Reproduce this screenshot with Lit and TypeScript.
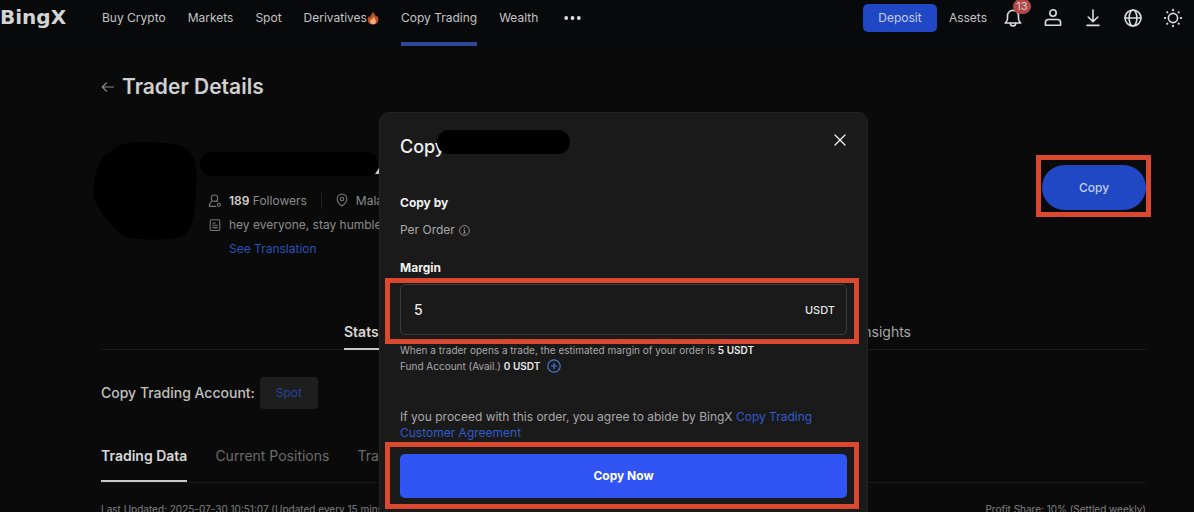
import { LitElement, html, css, svg } from "lit";
import { customElement, state } from "lit/decorators.js";

const closeIcon = html`<svg width="12" height="12" viewBox="0 0 12 12" fill="none" stroke="#f2f2f2" stroke-width="1.3" stroke-linecap="round" aria-hidden="true"><path d="M1 1l10 10M11 1L1 11" /></svg>`;

const backIcon = html`<svg width="14" height="12" viewBox="0 0 14 12" fill="none" stroke="#8a8a8a" stroke-width="1.2" stroke-linecap="round" stroke-linejoin="round" aria-hidden="true"><path d="M12.500 6H1.200M5.500 2L1.200 6l4.300 4" /></svg>`;

const flameIcon = html`<svg width="12" height="14" viewBox="0 0 12 14" aria-hidden="true">
  <path d="M5.600 0.500C6.300 2.500 8.300 3.600 9.300 5.600 9.700 5.200 9.800 4.700 9.800 4.300 11 5.800 11.500 7.400 11.300 9.200 11 11.900 8.800 13.500 6.100 13.500 3.200 13.500 0.900 11.800 0.800 8.900 0.700 7.200 1.500 5.900 2.400 4.700 2.500 5.400 2.700 5.900 3.200 6.300 3.300 4.100 5.600 3.200 5.600 0.500z" fill="#b8501f" />
  <path d="M6.200 5.200C6.600 7 8.900 7.900 8.900 10.400 8.900 12.200 7.700 13.200 6.100 13.200 4.400 13.200 3.200 12.200 3.200 10.500 3.200 9.400 3.700 8.600 4.300 8 4.500 8.700 4.800 9 5.200 9.100 5.100 7.600 6.200 6.900 6.200 5.200z" fill="#efb27c" />
</svg>`;

const stroke = (body: unknown) => html`<svg width="20" height="20" viewBox="0 0 20 20" fill="none" stroke="#dcdcdc" stroke-width="1.600" stroke-linecap="round" stroke-linejoin="round" aria-hidden="true">${body}</svg>`;

const bellIcon = stroke(svg`<path d="M2.200 15h15.600c-1.500-1.200-2.300-2.500-2.300-4.300V8c0-3.200-2.200-5.600-5.500-5.600S4.500 4.800 4.500 8v2.700c0 1.800-.8 3.100-2.300 4.300z"/><path d="M7.300 15.200a2.700 2.700 0 0 0 5.400 0"/>`);
const userIcon = stroke(svg`<circle cx="10" cy="5" r="3.200"/><path d="M2.400 17.300v-2.600c0-2 1.200-3.200 3.200-3.200h8.800c2 0 3.200 1.200 3.200 3.200v2.600z"/>`);
const downloadIcon = stroke(svg`<path d="M10 2v11.500M5.200 9l4.800 4.600L14.800 9M4 17.400h12"/>`);
const globeIcon = stroke(svg`<circle cx="10" cy="10" r="8"/><path d="M2 10h16"/><ellipse cx="10" cy="10" rx="3.900" ry="8"/>`);
const sunIcon = stroke(svg`<circle cx="10" cy="10" r="4.600"/><path stroke-width="2" d="M10 1.800v.4M10 17.800v.4M1.800 10h.4M17.800 10h.4M4.200 4.200l.2.2M15.600 15.600l.2.2M4.200 15.800l.2-.2M15.600 4.400l.2-.2"/>`);

const small = (body: unknown) => html`<svg width="14" height="14" viewBox="0 0 14 14" fill="none" stroke="#777" stroke-width="1.100" stroke-linecap="round" stroke-linejoin="round" aria-hidden="true">${body}</svg>`;

const followersIcon = small(svg`<circle cx="6.500" cy="4.200" r="3.200"/><path d="M4.600 7C2.500 7.800 1.300 9.800 1.300 12.400h6.500M8.600 7l.8.500"/><circle cx="10.900" cy="10.800" r="1.500"/>`);
const pinIcon = small(svg`<path d="M7 13C4 10.800 2.200 8.600 2.200 5.900 2.200 3.100 4.300 1.200 7 1.200s4.800 1.900 4.800 4.700C11.800 8.600 10 10.800 7 13z"/><circle cx="7" cy="5.900" r="1.700"/>`);
const noteIcon = small(svg`<rect x="2.200" y="1.700" width="9.600" height="10.800" rx="1.600"/><path d="M4.700 5h2.600M4.700 7.300h4.600M4.700 9.600h4.600"/>`);
const infoIcon = html`<svg width="11" height="11" viewBox="0 0 11 11" fill="none" stroke="#999" stroke-width="0.900" aria-hidden="true"><circle cx="5.500" cy="5.500" r="4.900" /><path d="M4.400 5h1.100v3M4.200 8h2.700M5.500 2.600v1.100" /></svg>`;
const plusIcon = html`<svg width="14" height="14" viewBox="0 0 14 14" fill="none" stroke="#4a78dc" stroke-width="1.200" stroke-linecap="round" aria-hidden="true"><circle cx="7" cy="7" r="6.200" /><path d="M7 4.300v5.400M4.300 7h5.400" /></svg>`;

@customElement("app-root")
export class AppRoot extends LitElement {
  @state() private margin = "5";

  static styles = css`
    :host {
      display: block;
      position: relative;
      height: 100vh;
      overflow: hidden;
      background: #0a0a0a;
      color: #c4c4c4;
      font: 400 12px/16px Inter, "Liberation Sans", sans-serif;
      --gutter-left: 101px;
      --gutter-right: 48px;
      --link: #2b52b8;
      --mark: #d9482f;
    }
    * { box-sizing: border-box; }
    svg { display: block; flex: none; }
    a { color: inherit; text-decoration: none; }
    button {
      font: inherit;
      color: inherit;
      background: none;
      border: 0;
      padding: 0;
      cursor: pointer;
    }
    h1, h2, h3, p { margin: 0; }

    .topbar {
      display: flex;
      height: 46px;
      background: #07090b;
      padding-right: 11px;
    }
    .logo {
      width: 102px;
      height: 36px;
      font-family: "DejaVu Sans", sans-serif;
      font-size: 20px;
      line-height: 34px;
      font-weight: 700;
      color: #d4d4d4;
    }
    .menu { display: flex; gap: 22px; flex: 1; }
    .menu a {
      display: flex;
      align-items: center;
      height: 46px;
      padding-bottom: 6px;
      border-bottom: 4px solid transparent;
      white-space: nowrap;
    }
    .menu a.current { border-bottom-color: #2f479b; }
    .more { height: 36px; padding: 0 4px; }
    .tools { display: flex; align-items: center; height: 36px; }
    .deposit {
      width: 74px;
      height: 28px;
      border-radius: 5px;
      background: #2148c4;
      color: #c3cff0;
      margin-right: 12px;
    }
    .icons { display: flex; gap: 20px; margin-left: 16px; }
    .icons button { position: relative; }
    .badge {
      position: absolute;
      top: -9px;
      left: 10px;
      width: 18px;
      height: 15px;
      border-radius: 8px;
      background: #b04a48;
      color: #e0c4c4;
      font-size: 11px;
      line-height: 15px;
      text-align: center;
    }

    main { padding: 29px var(--gutter-right) 0 var(--gutter-left); }
    .title { display: flex; align-items: center; gap: 7px; height: 24px; }
    h1 { font-size: 21px; line-height: 24px; font-weight: 600; color: #d0d0d0; }

    .profile { display: flex; align-items: flex-start; height: 98px; margin-top: 43px; }
    .avatar { margin-left: -8px; }
    .about { flex: 1; padding: 10px 0 0 3px; }
    .name { display: flex; align-items: flex-end; height: 24px; }
    .name-mask { width: 178px; height: 24px; border-radius: 12px; background: #000; }
    .name svg { margin-left: -3px; }
    .facts {
      display: grid;
      grid-template-columns: 14px auto;
      justify-content: start;
      align-items: center;
      column-gap: 7px;
      row-gap: 8px;
      margin: 17px 0 0 8px;
      color: #8c8c8c;
    }
    .facts > a { grid-column: 2; color: var(--link); }
    .counts { display: flex; align-items: center; }
    .counts b { font-weight: 600; color: #d0d0d0; }
    .place { display: flex; gap: 7px; margin-left: 14px; padding-left: 13px; border-left: 1px solid #222; }
    .spot { position: relative; margin-top: 23px; }
    .copy {
      width: 104px;
      height: 45px;
      border-radius: 23px;
      background: #2148c4;
      color: #c3cff0;
      font-weight: 500;
    }
    .mark {
      position: absolute;
      border: 5px solid var(--mark);
      pointer-events: none;
    }
    .spot .mark { inset: -10px -5px -7px -6px; }

    .sections { display: flex; justify-content: center; height: 36px; margin-top: 74px; padding-left: 8px; border-bottom: 1px solid #1c1c1c; }
    .sections div { display: flex; justify-content: space-between; width: 100%; max-width: 567px; }
    .sections a { font-size: 14px; line-height: 36px; height: 36px; color: #a8a8a8; }
    .sections a.current, .subtabs a.current { font-weight: 600; color: #d8d8d8; border-bottom: 2px solid #c8c8c8; }

    .account { display: flex; align-items: center; gap: 5px; margin-top: 27px; font-size: 14px; font-weight: 500; color: #c0c0c0; }
    .account button { width: 58px; height: 32px; border-radius: 4px; background: #1e1e1e; color: #234596; font-size: 12px; font-weight: 400; }
    .subtabs { display: flex; gap: 28px; height: 48px; margin-top: 26px; border-bottom: 1px solid #191919; }
    .subtabs a { font-size: 14px; line-height: 41px; height: 47px; color: #6c6c6c; }
    .footnote { display: flex; justify-content: space-between; margin-top: 18px; font-size: 10px; color: #808080; }

    .overlay {
      position: absolute;
      inset: 112px 0 0;
      display: flex;
      justify-content: center;
      align-items: flex-start;
      padding: 0 var(--gutter-right) 0 var(--gutter-left);
    }
    .modal {
      width: 489px;
      min-height: 420px;
      padding: 17px 20px;
      border: 1px solid #242424;
      border-radius: 10px;
      background: #1a1a1a;
      color: #a8a8a8;
    }
    .modal header { position: relative; display: flex; justify-content: space-between; height: 34px; }
    h2 { font-size: 18px; line-height: 34px; font-weight: 500; color: #f0f0f0; }
    .close { display: flex; width: 14px; height: 20px; align-items: center; justify-content: center; }
    .trader-mask { position: absolute; left: 37px; top: 0; width: 133px; height: 24px; border-radius: 12px; background: #000; }
    h3, .label { display: block; font-size: 12px; line-height: 16px; font-weight: 700; color: #f0f0f0; }
    h3 { margin-top: 31px; }
    .mode { display: flex; align-items: center; gap: 4px; margin-top: 11px; }
    .label { margin-top: 22px; }
    .field {
      position: relative;
      display: flex;
      align-items: center;
      height: 51px;
      margin-top: 8px;
      padding: 0 11px 0 13px;
      border: 1px solid #3a3a3a;
      border-radius: 5px;
    }
    .field input {
      flex: 1;
      min-width: 0;
      padding: 0;
      border: 0;
      outline: 0;
      background: none;
      color: #ececec;
      font: 500 14px/20px Inter, sans-serif;
    }
    .unit { font-size: 11px; font-weight: 500; color: #e6e6e6; }
    .field .mark { inset: -7px -13px -10px -16px; }
    .hint { margin-top: 7px; font-size: 10px; white-space: nowrap; }
    .fund { display: flex; align-items: center; gap: 7px; font-size: 10px; }
    .hint b, .fund b { font-weight: 600; color: #e6e6e6; }
    .terms { margin-top: 35px; }
    .terms a { color: #315bc8; }
    .submit { position: relative; margin-top: 13px; }
    .submit button { width: 100%; height: 44px; border-radius: 5px; background: #3055f4; color: #fff; font-weight: 700; }
    .submit .mark { inset: -12px -12px -11px -15px; }
  `;

  render() {
    return html`
      <header class="topbar">
        <a class="logo" href="#">BingX</a>
        <nav class="menu" aria-label="Main">
          <a href="#">Buy Crypto</a>
          <a href="#">Markets</a>
          <a href="#">Spot</a>
          <a href="#">Derivatives${flameIcon}</a>
          <a href="#" class="current" aria-current="page">Copy Trading</a>
          <a href="#">Wealth</a>
          <button class="more" aria-label="More">
            <svg width="17" height="4" viewBox="0 0 17 4" fill="#e0e0e0" aria-hidden="true"><circle cx="2.200" cy="2" r="1.900" /><circle cx="8.500" cy="2" r="1.900" /><circle cx="14.800" cy="2" r="1.900" /></svg>
          </button>
        </nav>
        <div class="tools">
          <button class="deposit">Deposit</button>
          <a href="#">Assets</a>
          <div class="icons">
            <button aria-label="Notifications">${bellIcon}<span class="badge">13</span></button>
            <button aria-label="Profile">${userIcon}</button>
            <button aria-label="Download">${downloadIcon}</button>
            <button aria-label="Language">${globeIcon}</button>
            <button aria-label="Theme">${sunIcon}</button>
          </div>
        </div>
      </header>

      <main>
        <div class="title">
          <button aria-label="Back">${backIcon}</button>
          <h1>Trader Details</h1>
        </div>

        <section class="profile">
          <svg class="avatar" width="104" height="98" viewBox="0 0 104 98" aria-hidden="true">
            <path d="M36 1C50-1 74 0 88 4c9 3 14 12 15 22 1 16 0 34-2 46-2 14-8 22-17 24-14 2-34 2-48 0C26 94 12 76 5 65 0 58-1 46 2 36 5 22 8 14 18 9 24 4 29 2 36 1z" fill="#000" />
          </svg>
          <div class="about">
            <div class="name">
              <span class="name-mask"></span>
              <svg width="8" height="8" viewBox="0 0 8 8" aria-hidden="true"><path d="M0 6L4 0l4 6z" fill="#c8c8c8" /></svg>
            </div>
            <div class="facts">
              ${followersIcon}
              <div class="counts"><span><b>189</b> Followers</span><span class="place">${pinIcon} Malaysia</span></div>
              ${noteIcon}
              <p>hey everyone, stay humble</p>
              <a href="#">See Translation</a>
            </div>
          </div>
          <div class="spot">
            <button class="copy">Copy</button>
            <span class="mark"></span>
          </div>
        </section>

        <nav class="sections" aria-label="Sections">
          <div>
            <a href="#" class="current">Stats</a>
            <a href="#">Insights</a>
          </div>
        </nav>

        <div class="account">
          <span>Copy Trading Account:</span>
          <button>Spot</button>
        </div>

        <nav class="subtabs" aria-label="Trading">
          <a href="#" class="current">Trading Data</a>
          <a href="#">Current Positions</a>
          <a href="#">Trade History</a>
        </nav>

        <div class="footnote">
          <span>Last Updated: 2025-07-30 10:51:07 (Updated every 15 mins)</span>
          <span>Profit Share: 10% (Settled weekly)</span>
        </div>
      </main>

      <div class="overlay">
        <section class="modal" role="dialog" aria-labelledby="heading">
          <header>
            <h2 id="heading">Copy</h2>
            <span class="trader-mask"></span>
            <button class="close" aria-label="Close">${closeIcon}</button>
          </header>
          <h3>Copy by</h3>
          <p class="mode">Per Order ${infoIcon}</p>
          <label class="label" for="margin">Margin</label>
          <div class="field">
            <input id="margin" inputmode="decimal" .value=${this.margin} @input=${(e: Event) => (this.margin = (e.target as HTMLInputElement).value)} />
            <span class="unit">USDT</span>
            <span class="mark"></span>
          </div>
          <p class="hint">When a trader opens a trade, the estimated margin of your order is <b>${this.margin} USDT</b></p>
          <p class="fund"><span>Fund Account (Avail.) <b>0 USDT</b></span><button aria-label="Add funds">${plusIcon}</button></p>
          <p class="terms">If you proceed with this order, you agree to abide by BingX <a href="#">Copy Trading Customer Agreement</a></p>
          <div class="submit">
            <button>Copy Now</button>
            <span class="mark"></span>
          </div>
        </section>
      </div>
    `;
  }
}
